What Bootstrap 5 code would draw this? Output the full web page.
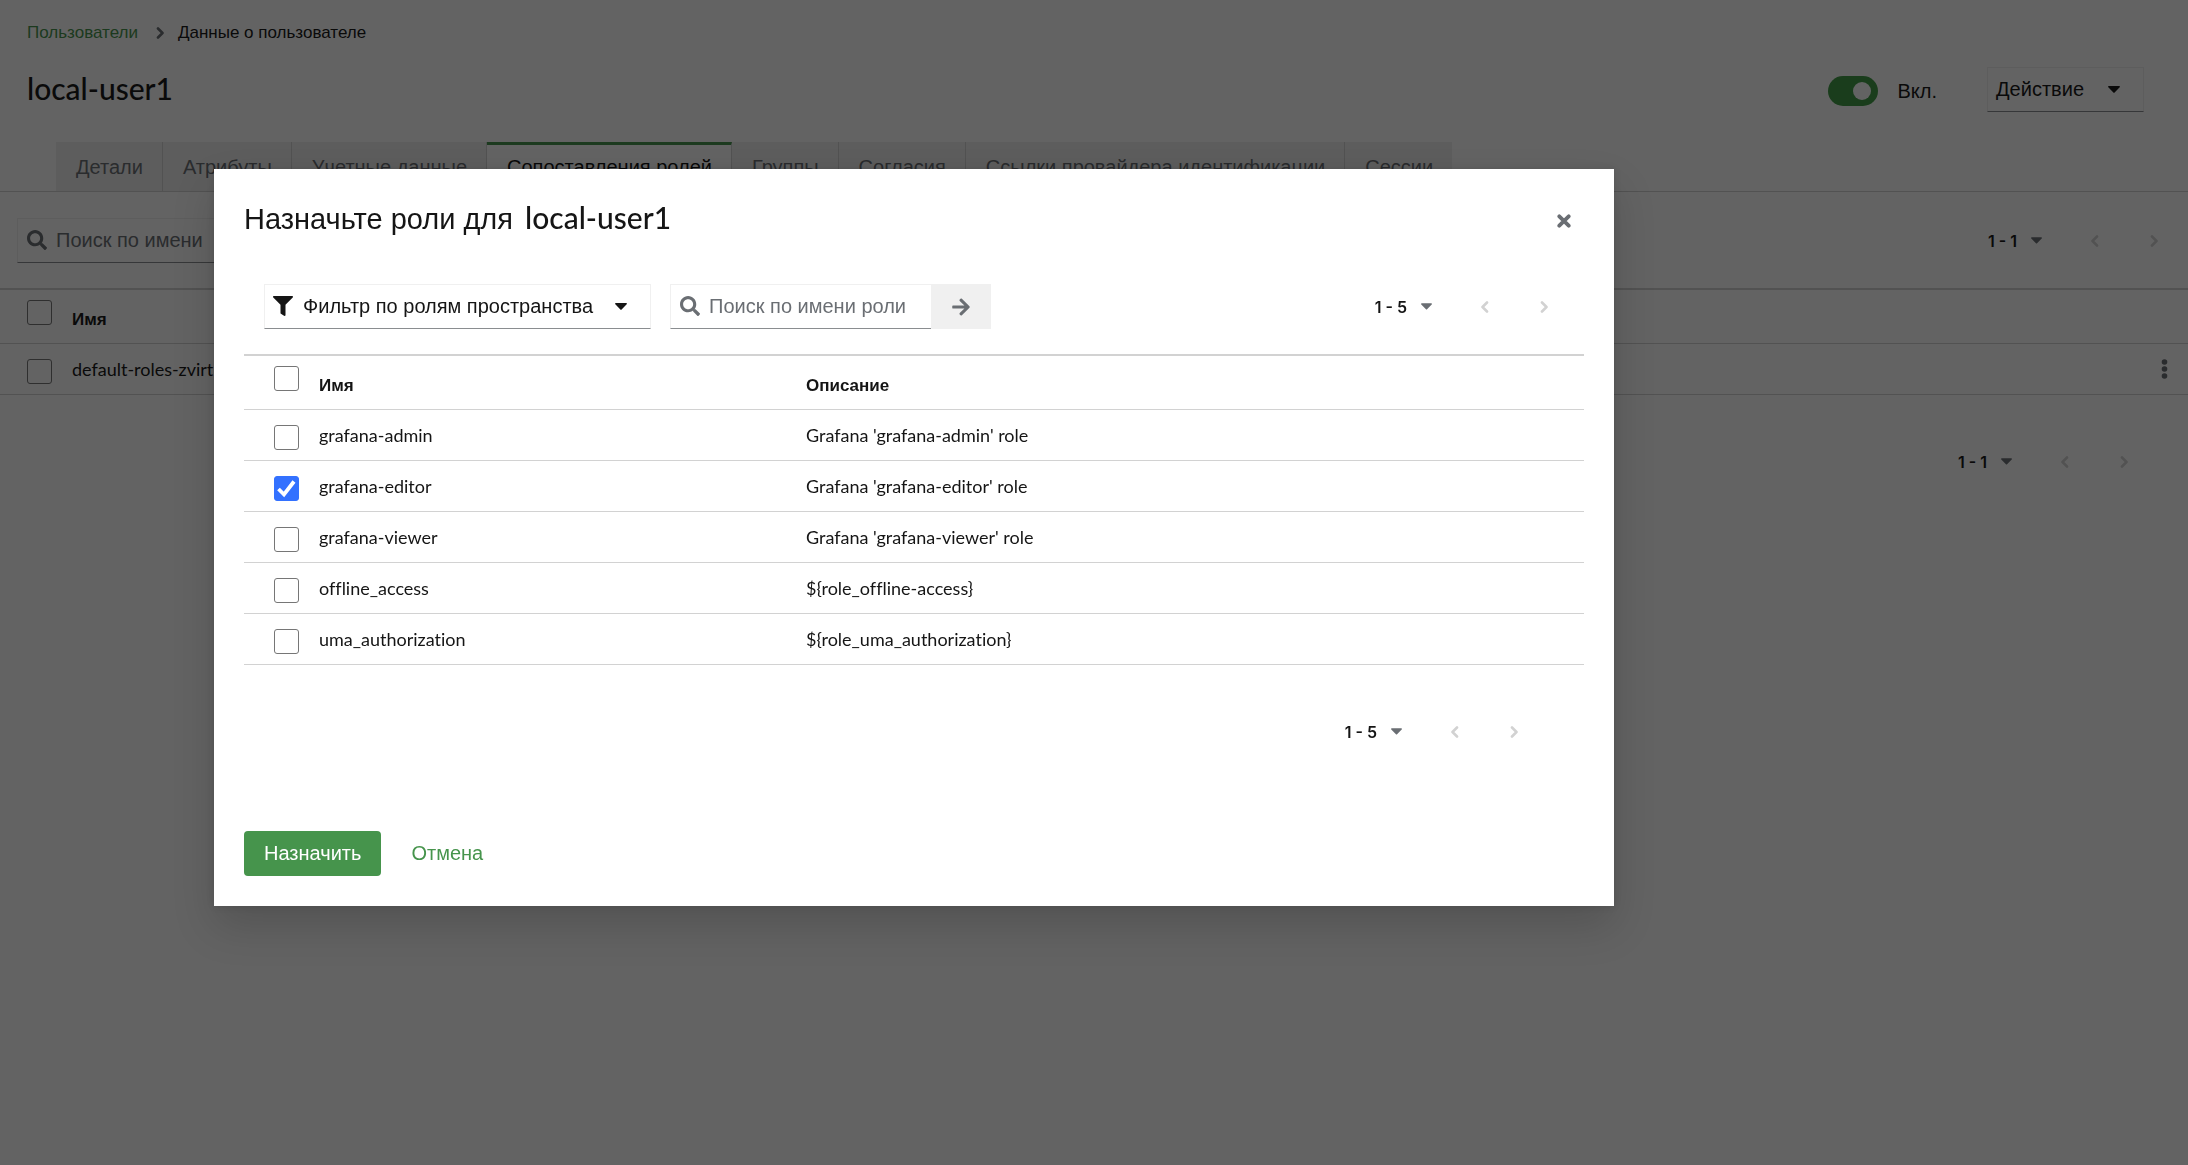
<!DOCTYPE html>
<html lang="ru">
<head>
<meta charset="utf-8">
<meta name="viewport" content="width=device-width, initial-scale=1">
<title>Данные о пользователе</title>
<link href="https://cdn.jsdelivr.net/npm/bootstrap@5.3.0/dist/css/bootstrap.min.css" rel="stylesheet">
<style>
:root { --ink: #151515; --muted: #6a6e73; --line: #d2d2d2; --green: #46944c; }
body { font-family: "Liberation Sans", Arial, sans-serif; font-size: 20px; line-height: 30px; color: var(--ink); background: #fff; font-variant-ligatures: none; }
svg { fill: currentColor; display: block; flex: none; }
.latin { font-family: Lato, sans-serif; }
.green-link { color: var(--green); text-decoration: none; }
.crumbs { font-size: 17px; line-height: 26px; padding: 20px 27px 0; }
.crumbs .breadcrumb-item + .breadcrumb-item::before { display: none; }
.crumbs .breadcrumb-item.active { color: var(--ink); }
.crumbs .breadcrumb-item + .breadcrumb-item { padding-left: 0; }
.crumbs svg { color: var(--muted); margin: 0 13px 0 18px; }
.page-title { font: 500 30px/42px Lato, sans-serif; font-variant-ligatures: none; }
.page-head { padding: 21px 44px 0 27px; }

.switch { gap: 20px; margin: 2px 50px 0 0; min-height: 0; }
.switch .form-check-input { width: 50px; height: 30px; border: 0; margin: 0; border-radius: 15px; background-color: #3f9c45;
  background-image: url("data:image/svg+xml,%3csvg xmlns='http://www.w3.org/2000/svg' viewBox='0 0 50 30'%3e%3ccircle cx='34' cy='15' r='9' fill='white'/%3e%3c/svg%3e"); background-size: 50px 30px; }
.field { background: #fff; border: 1px solid #f0f0f0; border-bottom-color: #8a8d90; height: 45px; border-radius: 0; color: var(--ink); font-size: 20px; line-height: 30px; padding-bottom: 1px !important; }
.menu-btn { padding: 0 23px 0 8px; }
.filter-btn svg:first-child { margin-right: 10px; }
.filter-btn svg:last-child { margin-left: 22px; }

.tabs { border-bottom: 1px solid var(--line); padding-left: 56px; margin-top: 30px; height: 50px; flex-wrap: nowrap; }
.tabs .nav-link { border: 0; border-radius: 0; height: 49px; padding: 10px 19px 9px 20px; background: #f0f0f0; color: var(--muted); border-right: 1px solid var(--line); white-space: nowrap; line-height: 30px; }
.tabs li:last-child .nav-link { border-right: 0; }
.tabs .nav-link.active { background: #fff; color: var(--ink); border-top: 3px solid var(--green); padding-top: 7px; height: 50px; }

.searchbox { padding: 0 0 0 9px; gap: 9px; color: var(--muted); }
.searchbox input { border: 0; outline: 0; padding: 0; background: none; width: 100%; min-width: 0; }
.searchbox input::placeholder { color: var(--muted); opacity: 1; }
.searchbox input::-webkit-search-cancel-button { display: none; }
.pager { font: 600 16px/24px Inter, sans-serif; gap: 48px; }
.pager button { border: 0; background: none; padding: 0; color: var(--line); font: inherit; }
.pager .range { color: var(--ink); display: flex; align-items: center; gap: 14px; }
.pager .range svg { color: var(--muted); }
.pager .step + .step { margin-left: 3px; }

.grid { --bs-table-bg: transparent; border-top: 2px solid var(--line); border-color: var(--line); color: var(--ink); margin: 0; table-layout: fixed; }
.grid > :not(caption) > * > * { padding: 0; border-bottom: 1px solid var(--line); box-shadow: none; color: var(--ink); }
.grid th { font: 700 17px/26px "Liberation Sans", Arial, sans-serif; height: 54px; padding-top: 7px !important; vertical-align: middle; }
.grid td { font: 400 18px/26px Lato, sans-serif; font-variant-ligatures: none; height: 51px; vertical-align: middle; }
.grid th.pick { padding: 10px 0 0 30px !important; vertical-align: top; }
.grid td.pick { padding: 15px 0 0 30px !important; vertical-align: top; }
.grid .form-check-input { display: block; width: 25px; height: 25px; margin: 0; border: 1px solid #767676; border-radius: 3px; background-color: #fff; }
.grid .form-check-input:checked { background-color: #3371ff; border-color: #3371ff;
  background-image: url("data:image/svg+xml,%3csvg xmlns='http://www.w3.org/2000/svg' viewBox='0 0 25 25'%3e%3cpath d='M4.500 13l5.500 5.500L20 5.500' fill='none' stroke='white' stroke-width='3.800'/%3e%3c/svg%3e"); background-size: 25px; }
.users tr > .pick { padding-left: 27px !important; }
.pick-col { width: 75px; } .users .pick-col { width: 72px; }
.name-col { width: 487px; } .users .act-col { width: 60px; }
.page-tools { padding: 26px 29px 25px 17px; }
.page-tools .searchbox { width: 262px; }
.page-pager { padding: 55px 59px 0 0; }

.modal-backdrop { --bs-backdrop-bg: #030303; --bs-backdrop-opacity: .62; }
.roles-dialog { max-width: 1400px; margin: 169px 28px 0 214px; }
.roles-dialog .modal-content { border: 0; border-radius: 0; padding: 30px; box-shadow: 0 20px 40px rgba(3,3,3,.16), 0 0 8px rgba(3,3,3,.1); }
.roles-title { font: 400 29px/36px "Liberation Sans", Arial, sans-serif; color: var(--ink); }
.roles-title .latin { font-size: 30px; font-weight: 500; }
.close-btn { border: 0; background: none; color: var(--muted); padding: 15px 13px 11px; }
.modal-tools { padding: 45px 35px 25px 20px; gap: 19px; }
.modal-tools .searchbox { width: 261px; border-right: 0; }
.go-btn { width: 60px; height: 45px; border: 0; background: #f0f0f0; color: var(--muted); }
.modal-pager { padding: 55px 65px 87px 0; }
.modal-actions { gap: 30px; }
.btn-assign { background: var(--green); border: 0; color: #fff; border-radius: 4px; font-size: 20px; line-height: 30px; padding: 7px 20px 8px; }
.btn-cancel { border: 0; background: none; color: var(--green); font-size: 20px; line-height: 30px; padding: 0; }
.btn-assign:hover { background: var(--green); color: #fff; }
</style>
<script src="https://cdn.jsdelivr.net/npm/bootstrap@5.3.0/dist/js/bootstrap.bundle.min.js"></script>
</head>
<body>
<svg width="0" height="0" class="position-absolute" aria-hidden="true">
  <symbol id="i-search" viewBox="0 0 512 512"><path d="M505 442.700l-99.700-99.700c-4.500-4.500-10.600-7-17-7H372c27.600-35.300 44-79.700 44-128C416 93.100 322.900 0 208 0S0 93.100 0 208s93.100 208 208 208c48.300 0 92.700-16.400 128-44v16.300c0 6.400 2.500 12.500 7 17l99.700 99.700c9.400 9.400 24.600 9.400 33.900 0l28.300-28.300c9.400-9.400 9.400-24.600.1-34zM208 336c-70.700 0-128-57.200-128-128 0-70.700 57.200-128 128-128 70.700 0 128 57.200 128 128 0 70.700-57.200 128-128 128z"/></symbol>
  <symbol id="i-filter" viewBox="0 0 512 512"><path d="M487.976 0H24.028C2.710 0-8.047 25.866 7.058 40.971L192 225.941V432c0 7.831 3.821 15.170 10.237 19.662l80 55.980C298.020 518.690 320 507.493 320 487.980V225.941l184.947-184.970C520.021 25.896 509.338 0 487.976 0z"/></symbol>
  <symbol id="i-caret" viewBox="0 0 12 7"><path d="M.8 0h10.400c.7 0 1 .8.5 1.300L6.600 6.600c-.3.400-.9.400-1.200 0L.3 1.300C-.2.800.1 0 .8 0z"/></symbol>
  <symbol id="i-left" viewBox="0 0 9 12"><path d="M7 1.500L2.500 6 7 10.500" fill="none" stroke="currentColor" stroke-width="2.600" stroke-linecap="round" stroke-linejoin="round"/></symbol>
  <symbol id="i-right" viewBox="0 0 9 12"><path d="M2 1.500L6.500 6 2 10.500" fill="none" stroke="currentColor" stroke-width="2.600" stroke-linecap="round" stroke-linejoin="round"/></symbol>
  <symbol id="i-arrow" viewBox="0 0 448 512"><path d="M190.500 66.900l22.200-22.200c9.400-9.400 24.600-9.400 33.900 0L441 239c9.400 9.400 9.400 24.600 0 33.900L246.600 467.300c-9.400 9.400-24.600 9.400-33.900 0l-22.200-22.200c-9.500-9.500-9.300-25 .4-34.300L311.400 296H24c-13.300 0-24-10.700-24-24v-32c0-13.300 10.700-24 24-24h287.400L190.900 101.200c-9.800-9.300-10-24.800-.4-34.300z"/></symbol>
  <symbol id="i-close" viewBox="0 0 14 14"><path d="M2.300 2.300l9.400 9.400M11.700 2.300l-9.400 9.400" fill="none" stroke="currentColor" stroke-width="3.800" stroke-linecap="round"/></symbol>
  <symbol id="i-kebab" viewBox="0 0 7 20"><circle cx="3.500" cy="3" r="2.800"/><circle cx="3.500" cy="10" r="2.800"/><circle cx="3.500" cy="17" r="2.800"/></symbol>
</svg>

<main>
  <nav class="crumbs" aria-label="breadcrumb">
    <ol class="breadcrumb align-items-center m-0">
      <li class="breadcrumb-item"><a class="green-link" href="#">Пользователи</a></li>
      <li class="breadcrumb-item active d-flex align-items-center" aria-current="page"><svg width="9" height="12"><use href="#i-right"/></svg>Данные о пользователе</li>
    </ol>
  </nav>

  <header class="page-head d-flex align-items-center">
    <h1 class="page-title m-0 me-auto align-self-start">local-user1</h1>
    <div class="form-check form-switch switch d-flex align-items-center p-0">
      <input class="form-check-input" type="checkbox" role="switch" id="enabled" checked>
      <label for="enabled">Вкл.</label>
    </div>
    <button type="button" class="field menu-btn d-flex align-items-center" aria-haspopup="menu">Действие<svg class="ms-4" width="12" height="7"><use href="#i-caret"/></svg></button>
  </header>

  <ul class="nav tabs">
    <li><a class="nav-link" href="#">Детали</a></li>
    <li><a class="nav-link" href="#">Атрибуты</a></li>
    <li><a class="nav-link" href="#">Учетные данные</a></li>
    <li><a class="nav-link active" aria-current="page" href="#">Сопоставления ролей</a></li>
    <li><a class="nav-link" href="#">Группы</a></li>
    <li><a class="nav-link" href="#">Согласия</a></li>
    <li><a class="nav-link" href="#">Ссылки провайдера идентификации</a></li>
    <li><a class="nav-link" href="#">Сессии</a></li>
  </ul>

  <div class="page-tools d-flex align-items-center">
    <div class="field searchbox d-flex align-items-center">
      <svg width="20" height="20"><use href="#i-search"/></svg>
      <input type="search" placeholder="Поиск по имени" aria-label="Поиск по имени">
    </div>
    <div class="pager d-flex align-items-center ms-auto">
      <button type="button" class="range"><span>1 - 1</span><svg width="11" height="7"><use href="#i-caret"/></svg></button>
      <button type="button" class="step" aria-label="Назад"><svg width="9" height="12"><use href="#i-left"/></svg></button>
      <button type="button" class="step" aria-label="Вперёд"><svg width="9" height="12"><use href="#i-right"/></svg></button>
    </div>
  </div>

  <table class="table grid users">
    <colgroup><col class="pick-col"><col><col class="act-col"></colgroup>
    <thead><tr><th class="pick"><input class="form-check-input" type="checkbox" aria-label="Выбрать все"></th><th>Имя</th><th></th></tr></thead>
    <tbody><tr>
      <td class="pick"><input class="form-check-input" type="checkbox" aria-label="default-roles-zvirt"></td>
      <td>default-roles-zvirt</td>
      <td><button type="button" class="btn p-0 border-0 d-block ms-auto me-3 pe-1" aria-label="Действия"><svg width="7" height="20" color="#6a6e73"><use href="#i-kebab"/></svg></button></td>
    </tr></tbody>
  </table>
  <div class="pager page-pager d-flex align-items-center justify-content-end">
    <button type="button" class="range"><span>1 - 1</span><svg width="11" height="7"><use href="#i-caret"/></svg></button>
    <button type="button" class="step" aria-label="Назад"><svg width="9" height="12"><use href="#i-left"/></svg></button>
    <button type="button" class="step" aria-label="Вперёд"><svg width="9" height="12"><use href="#i-right"/></svg></button>
  </div>
</main>

<div class="modal-backdrop show"></div>
<div class="modal show d-block" tabindex="-1" role="dialog" aria-modal="true" aria-labelledby="roles-title">
  <div class="modal-dialog roles-dialog">
    <div class="modal-content">
      <div class="d-flex align-items-start">
        <h2 class="roles-title m-0 me-auto" id="roles-title">Назначьте роли для <span class="latin ms-1">local-user1</span></h2>
        <button type="button" class="close-btn" aria-label="Закрыть"><svg width="14" height="14"><use href="#i-close"/></svg></button>
      </div>
      <div class="modal-tools d-flex align-items-center">
        <button type="button" class="field menu-btn filter-btn d-flex align-items-center" aria-haspopup="menu"><svg width="20" height="20"><use href="#i-filter"/></svg>Фильтр по ролям пространства<svg width="12" height="7"><use href="#i-caret"/></svg></button>
        <div class="d-flex">
          <div class="field searchbox d-flex align-items-center">
            <svg width="20" height="20"><use href="#i-search"/></svg>
            <input type="search" placeholder="Поиск по имени роли" aria-label="Поиск по имени роли">
          </div>
          <button type="button" class="go-btn d-flex align-items-center justify-content-center" aria-label="Искать"><svg width="18" height="20"><use href="#i-arrow"/></svg></button>
        </div>
        <div class="pager d-flex align-items-center ms-auto">
          <button type="button" class="range"><span>1 - 5</span><svg width="11" height="7"><use href="#i-caret"/></svg></button>
          <button type="button" class="step" aria-label="Назад"><svg width="9" height="12"><use href="#i-left"/></svg></button>
          <button type="button" class="step" aria-label="Вперёд"><svg width="9" height="12"><use href="#i-right"/></svg></button>
        </div>
      </div>
      <table class="table grid">
        <colgroup><col class="pick-col"><col class="name-col"><col></colgroup>
        <thead><tr><th class="pick"><input class="form-check-input" type="checkbox" aria-label="Выбрать все роли"></th><th>Имя</th><th>Описание</th></tr></thead>
        <tbody>
          <tr><td class="pick"><input class="form-check-input" type="checkbox" id="r1"></td><td><label for="r1">grafana-admin</label></td><td>Grafana 'grafana-admin' role</td></tr>
          <tr><td class="pick"><input class="form-check-input" type="checkbox" id="r2" checked></td><td><label for="r2">grafana-editor</label></td><td>Grafana 'grafana-editor' role</td></tr>
          <tr><td class="pick"><input class="form-check-input" type="checkbox" id="r3"></td><td><label for="r3">grafana-viewer</label></td><td>Grafana 'grafana-viewer' role</td></tr>
          <tr><td class="pick"><input class="form-check-input" type="checkbox" id="r4"></td><td><label for="r4">offline_access</label></td><td>${role_offline-access}</td></tr>
          <tr><td class="pick"><input class="form-check-input" type="checkbox" id="r5"></td><td><label for="r5">uma_authorization</label></td><td>${role_uma_authorization}</td></tr>
        </tbody>
      </table>
      <div class="pager modal-pager d-flex align-items-center justify-content-end">
        <button type="button" class="range"><span>1 - 5</span><svg width="11" height="7"><use href="#i-caret"/></svg></button>
        <button type="button" class="step" aria-label="Назад"><svg width="9" height="12"><use href="#i-left"/></svg></button>
        <button type="button" class="step" aria-label="Вперёд"><svg width="9" height="12"><use href="#i-right"/></svg></button>
      </div>
      <div class="modal-actions d-flex align-items-center">
        <button type="button" class="btn btn-assign">Назначить</button>
        <button type="button" class="btn-cancel">Отмена</button>
      </div>
    </div>
  </div>
</div>
</body>
</html>
